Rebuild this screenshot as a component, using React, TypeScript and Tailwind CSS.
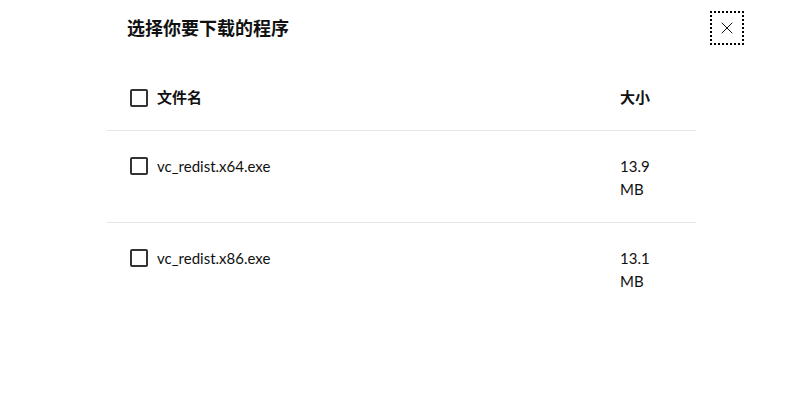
import { X } from "lucide-react";

// ── Data ───────────────────────────────────────────────────────

const FILES = [
  { name: "vc_redist.x64.exe", size: "13.9", unit: "MB" },
  { name: "vc_redist.x86.exe", size: "13.1", unit: "MB" },
];

const FONT = {
  fontFamily: 'Lato, "Noto Sans CJK SC", sans-serif',
};

// ── Component ──────────────────────────────────────────────────

export default function App() {
  return (
    <div
      className="relative h-[400px] w-[799px] overflow-hidden bg-white text-[#111]"
      style={FONT}
    >
      {/* Close button */}
      <button
        type="button"
        className="absolute left-[710px] top-[11px] flex h-[34px] w-[34px] items-center justify-center border-2 border-dotted border-black"
      >
        <X className="h-[20px] w-[20px]" strokeWidth={1.2} />
      </button>

      <h2 className="pl-[127px] pt-[16px] text-[18px] font-bold leading-[24px]">
        选择你要下载的程序
      </h2>

      <div className="ml-[107px] mt-[25px] w-[589px]">
        {/* Header row */}
        <div className="flex border-b border-[#e6e6e6] pb-[21px] pt-[21px]">
          <div className="flex flex-1 items-center gap-[9px] pl-[23px]">
            <Checkbox />
            <span className="text-[15px] font-bold leading-[23px]">文件名</span>
          </div>
          <div className="w-[76px] text-[15px] font-bold leading-[23px]">大小</div>
        </div>

        {/* File rows */}
        {FILES.map((f, i) => (
          <div
            key={f.name}
            className={`flex pb-[21px] pt-[24px] ${
              i < FILES.length - 1 ? "border-b border-[#e6e6e6]" : ""
            }`}
          >
            <div className="flex flex-1 items-start gap-[9px] pl-[23px]">
              <div className="pt-[2px]">
                <Checkbox />
              </div>
              <span className="text-[15px] leading-[23px]">{f.name}</span>
            </div>
            <div className="w-[76px] text-[15px] leading-[23px]">
              <div>{f.size}</div>
              <div>{f.unit}</div>
            </div>
          </div>
        ))}
      </div>
    </div>
  );
}

// ── Sub-components ─────────────────────────────────────────────

function Checkbox() {
  return (
    <span className="block h-[18px] w-[18px] rounded-[2px] border-2 border-[#333]" />
  );
}
